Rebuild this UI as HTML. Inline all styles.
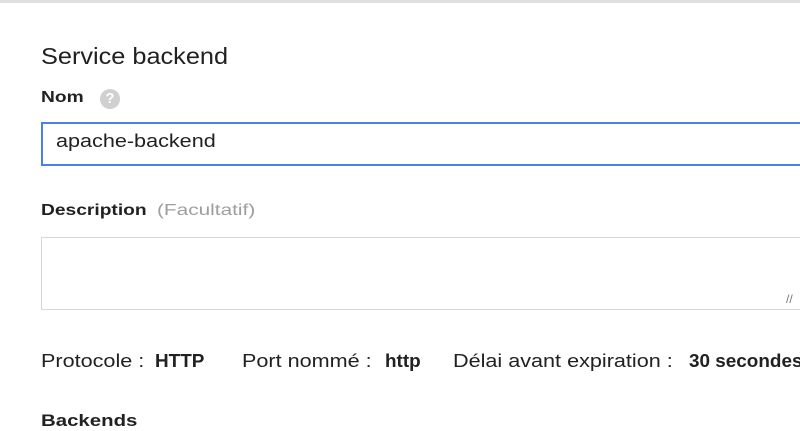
<!DOCTYPE html><html><head><style>
body{margin:0;width:800px;height:419px;overflow:hidden;background:#fff;font-family:"Liberation Sans",sans-serif;color:#212121;position:relative}
.a{position:absolute;white-space:nowrap}
.s{transform:scaleX(1.2);transform-origin:left center}
</style></head><body>
<div class="a" style="left:0;top:0;width:800px;height:3px;background:#e0e0e0"></div>
<div class="a s" style="left:41px;top:43px;font-size:23px;transform:scaleX(1.1)">Service backend</div>
<div class="a s" style="left:41px;top:89px;font-size:16px;font-weight:bold">Nom</div>
<div class="a" style="left:100px;top:89px;width:20px;height:20px;border-radius:50%;background:#d0d0d0;color:#fff;font-size:15px;font-weight:bold;text-align:center;line-height:20px">?</div>
<div class="a" style="left:41px;top:122px;width:770px;height:40px;border:2px solid #4a80e8;box-sizing:content-box"></div>
<div class="a s" style="left:56px;top:131px;font-size:18px">apache-backend</div>
<div class="a s" style="left:41px;top:202px;font-size:16px;font-weight:bold">Description</div>
<div class="a s" style="left:157px;top:202px;font-size:16px;color:#9e9e9e;transform:scaleX(1.3)">(Facultatif)</div>
<div class="a" style="left:41px;top:237px;width:770px;height:71px;border:1px solid #d6d6d6"></div>
<div class="a" style="left:786px;top:292px;font-size:12px;color:#777">//</div>
<div class="a s" style="left:41px;top:351px;font-size:18px">Protocole :</div>
<div class="a s" style="left:155px;top:351px;font-size:18px;font-weight:bold;transform:scaleX(1.05)">HTTP</div>
<div class="a s" style="left:242px;top:351px;font-size:18px">Port nommé :</div>
<div class="a s" style="left:385px;top:351px;font-size:18px;font-weight:bold;transform:scaleX(1.05)">http</div>
<div class="a s" style="left:453px;top:351px;font-size:18px">Délai avant expiration :</div>
<div class="a s" style="left:689px;top:351px;font-size:18px;font-weight:bold;transform:scaleX(1.05)">30 secondes</div>
<div class="a s" style="left:41px;top:411px;font-size:17px;font-weight:bold">Backends</div>
</body></html>
